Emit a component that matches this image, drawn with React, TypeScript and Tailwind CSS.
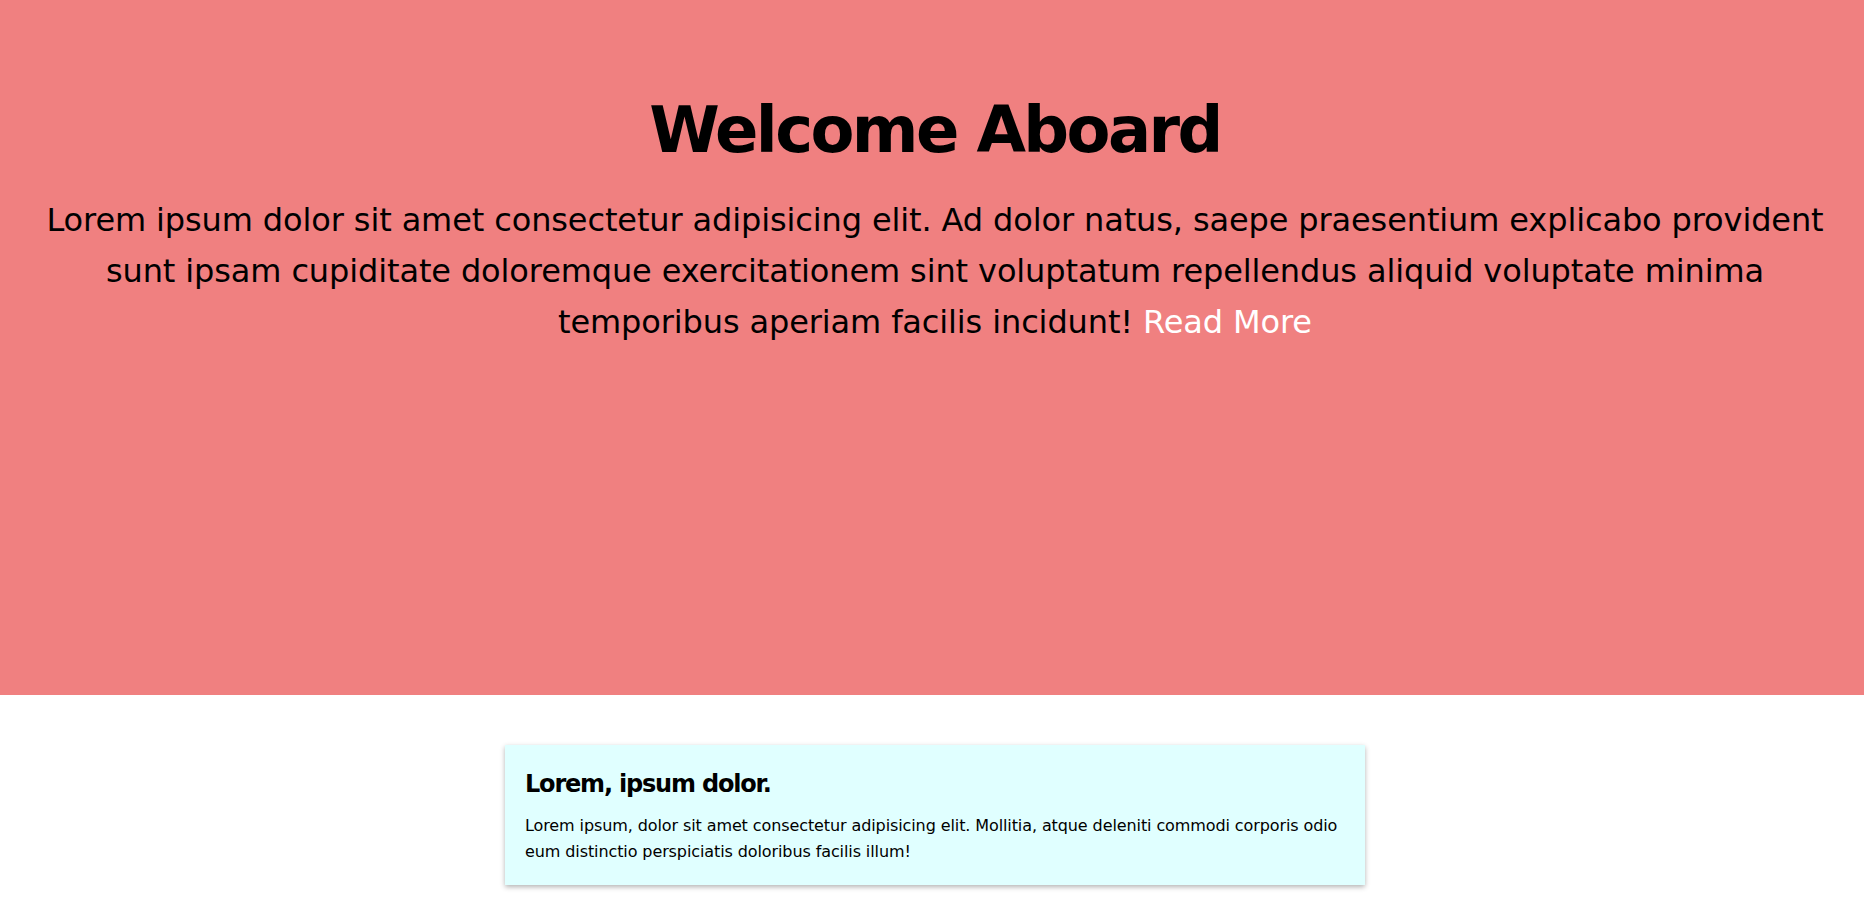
export default function App() {
  return (
    <div className="min-h-screen bg-white font-['DejaVu_Sans',sans-serif] text-black">
      <section className="h-[695px] bg-[#f08080] pl-[36px] pr-[30px] pt-[92px] text-center">
        <h1 className="text-[64px] font-bold leading-[76.8px] tracking-[-2.6px]">Welcome Aboard</h1>
        <p className="mt-[26px] text-[32px] leading-[51.2px] tracking-[-0.12px]">
          Lorem ipsum dolor sit amet consectetur adipisicing elit. Ad dolor natus, saepe praesentium explicabo provident
          sunt ipsam cupiditate doloremque exercitationem sint voluptatum repellendus aliquid voluptate minima temporibus
          aperiam facilis incidunt! <a href="#" className="text-white">Read More</a>
        </p>
      </section>

      <div className="pl-[6px]">
        <div className="mx-auto mt-[50px] w-[860px] bg-[#e0ffff] p-[20px] shadow-[0_2px_5px_rgba(0,0,0,0.3)]">
          <h2 className="text-[24px] font-bold leading-[38.4px] tracking-[-1.2px]">Lorem, ipsum dolor.</h2>
          <p className="mt-[10px] text-[16px] leading-[25.6px] tracking-[-0.1px]">
            Lorem ipsum, dolor sit amet consectetur adipisicing elit. Mollitia, atque deleniti commodi corporis odio eum
            distinctio perspiciatis doloribus facilis illum!
          </p>
        </div>
      </div>
    </div>
  );
}
